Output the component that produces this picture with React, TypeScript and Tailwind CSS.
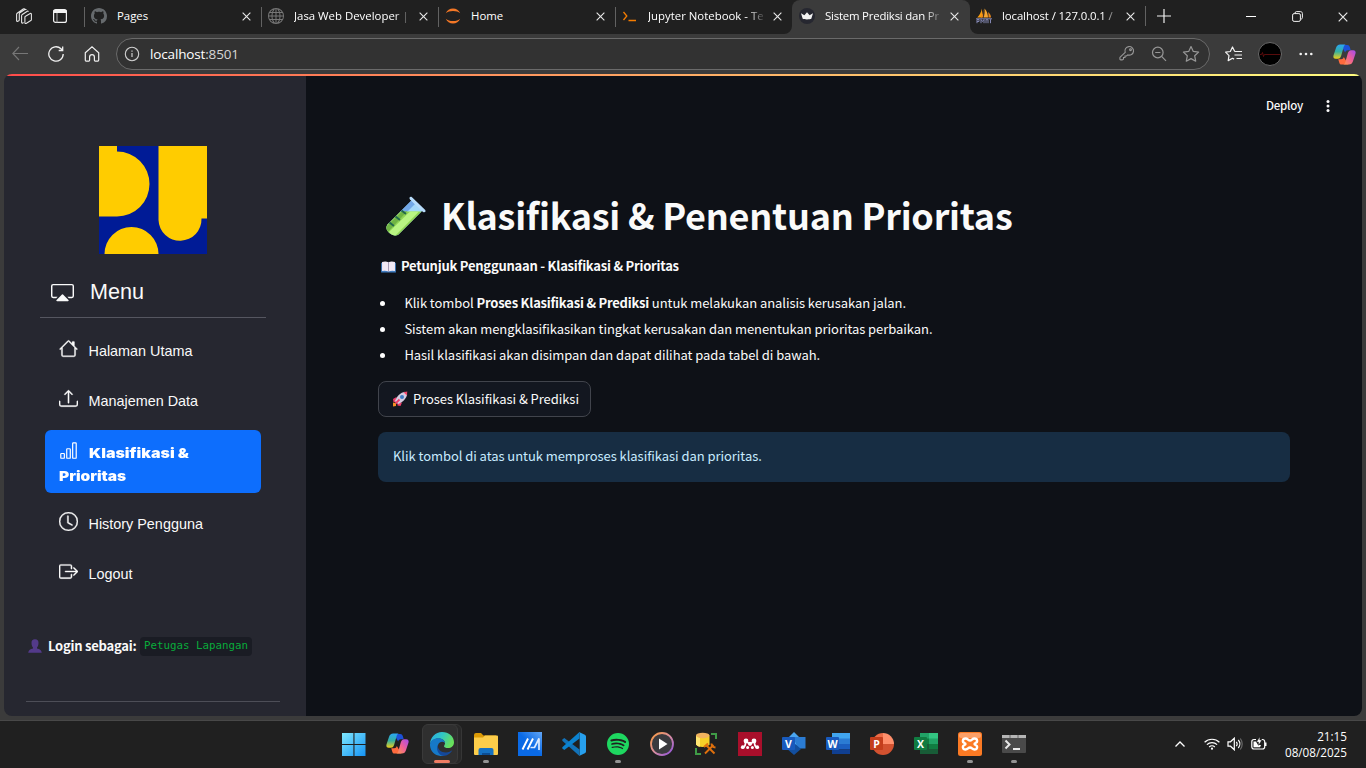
import React from "react";
import { BsCast, BsHouse, BsUpload, BsBarChart, BsClock, BsBoxArrowRight, BsGithub, BsGlobe, BsSpotify } from "react-icons/bs";

const SEGOE = "font-['Open_Sans','Noto_Sans',sans-serif]";
const SOURCE = "font-['Noto_Sans_CJK_JP','Noto_Sans_CJK_SC',sans-serif]";
const ARIAL = "font-['Liberation_Sans',Arial,sans-serif]";

function T({ className = "", children }: { className?: string; children: React.ReactNode }) {
  return <span className={`whitespace-nowrap ${className}`}>{children}</span>;
}

function CloseIcon({ className = "size-[9px]" }: { className?: string }) {
  return (
    <svg viewBox="0 0 10 10" className={className} fill="none" stroke="#e8e8e8" strokeWidth="1.2">
      <path d="M.7.7l8.6 8.6M9.3.7L.7 9.3" />
    </svg>
  );
}

function Copilot({ id, className }: { id: string; className: string }) {
  return (
    <svg viewBox="0 0 24 24" className={className}>
      <defs>
        <linearGradient id={`${id}a`} x1="0" y1="0" x2="0" y2="1">
          <stop offset="0" stopColor="#2aa5f5" />
          <stop offset=".5" stopColor="#35b0a0" />
          <stop offset="1" stopColor="#f3d016" />
        </linearGradient>
        <linearGradient id={`${id}b`} x1="1" y1="0" x2="0" y2="1">
          <stop offset="0" stopColor="#a24bf0" />
          <stop offset=".5" stopColor="#ee5f96" />
          <stop offset="1" stopColor="#ff9a4a" />
        </linearGradient>
      </defs>
      <path d="M8 2h7c1.600 0 2.200 1 2.600 2.400L18.500 7.500h-3c-1.500 0-2.300.800-2.800 2.300z" fill="#1c50d8" />
      <path d="M16 22.500H9c-1.600 0-2.200-1-2.600-2.400L5.500 17h3c1.500 0 2.300-.800 2.800-2.300z" fill="#ff6a3d" />
      <path d="M7.500 1.500h6c-1.500.3-2 1.400-2.400 2.800L8.600 13C8 15 7 16.500 5 16.500H3C.8 16.500 0 15 .5 13l2.600-7.800C3.800 2.800 5.200 1.500 7.500 1.500z" fill={`url(#${id}a)`} />
      <path d="M16.500 22.500h-6c1.500-.3 2-1.400 2.400-2.800l2.500-8.700c.6-2 1.600-3.500 3.600-3.500h2c2.200 0 3 1.500 2.500 3.500l-2.600 7.800c-.7 2.400-2.100 3.700-4.400 3.700z" fill={`url(#${id}b)`} />
    </svg>
  );
}

const JupyterIcon = (
  <svg viewBox="0 0 16 16" className="size-4" fill="#f37726">
    <path d="M.8 5.200C2 2.200 4.800.5 8 .5s6 1.700 7.200 4.700C13.500 3.700 11 2.900 8 2.900s-5.500.8-7.200 2.300zM.8 10.800C2 13.800 4.800 15.500 8 15.500s6-1.700 7.200-4.700c-1.700 1.500-4.200 2.300-7.200 2.300s-5.500-.8-7.200-2.300z" />
  </svg>
);
const PromptIcon = (
  <svg viewBox="0 0 16 16" className="size-4" fill="none" stroke="#f57c00" strokeWidth="1.300">
    <path d="M1.500 4l3.300 4-3.300 4M6.500 12.500H14" />
  </svg>
);
const CrownIcon = (
  <svg viewBox="0 0 16 16" className="size-4">
    <circle cx="8" cy="8" r="8" fill="#262730" />
    <path d="M2 5.200l3.400 2L8 4.200l2.600 3 3.400-2-1.700 5.600c-1.300.8-7.300.8-8.600 0z" fill="#f2f2f2" />
  </svg>
);
const PmaIcon = (
  <svg viewBox="0 0 16 16" className="size-4">
    <path d="M6 .5v9H1.200C3.500 7.500 5 4.500 6 .5z" fill="#f89c0e" />
    <path d="M7.200 1v8.500H4.800C6 7.500 6.900 4.500 7.200 1z" fill="#e8851a" />
    <path d="M8.500.5C11 3 12 6.500 12 9.500H7.600C8.500 7 8.800 4 8.500.5z" fill="#f5a632" />
    <path d="M12 4c2 1.500 3 3.500 3 5.500h-2.600C12.600 7.500 12.500 6 12 4z" fill="#e8851a" />
    <path d="M0 10.800h16M1 15.200v-3.700h2v2H1M5 15.200v-3.700l1.500 2 1.500-2v3.700M10 15.200v-3.500h2v3.500M14.500 15.200v-4" fill="none" stroke="#8387b3" strokeWidth="1" />
  </svg>
);

type Tab = { icon: React.ReactNode; title: string; active?: boolean; noline?: boolean; track?: string };
const tabs: Tab[] = [
  { icon: <BsGithub className="size-4 text-[#666a6d]" />, title: "Pages" },
  { icon: <BsGlobe className="size-4 text-[#777]" />, title: "Jasa Web Developer |" },
  { icon: JupyterIcon, title: "Home" },
  { icon: PromptIcon, title: "Jupyter Notebook - Te" },
  { icon: CrownIcon, title: "Sistem Prediksi dan Pr", active: true, track: "tracking-[-0.2px]" },
  { icon: PmaIcon, title: "localhost / 127.0.0.1 /", noline: true, track: "tracking-[-0.1px]" },
];

function TabBar() {
  return (
    <div className="flex h-[34px] items-stretch bg-[#202020]">
      <div className="flex w-[84px] items-center gap-5 pb-0.5 pl-4">
        <svg viewBox="0 0 16 16" className="size-4" fill="none" stroke="#e4e4e4" strokeWidth="1.100">
          <path d="M6.300 6.500l5-3.300c.6-.4 1 0 1 .6M6.300 6.500c-.5.300-.7.700-.7 1.200v6.600c0 .8.600 1 1.200.7l.8-.5" />
          <path d="M9.500 8.200l4.700-2.700c.6-.3 1.200 0 1.200.700v5.300c0 .5-.2.900-.6 1.100l-4.700 2.800c-.6.300-1.200 0-1.200-.7V9.300c0-.5.200-.9.600-1.100z" />
          <path d="M3.300 12.500l-1.500.8c-.6.300-1.200 0-1.200-.6V6.500c0-.5.200-.9.600-1.200L7.200 1c.6-.4 1.300-.2 1.500.5M3.300 12.500V6c0-.5.200-.9.600-1.200l5-3.300c.6-.4 1.200 0 1.400.5" />
        </svg>
        <svg viewBox="0 0 16 16" className="size-4" fill="none" stroke="#f3f3f3">
          <rect x="1.600" y="1.600" width="12.800" height="12.800" rx="2" strokeWidth="1.200" />
          <path d="M1.500 3.500h13" strokeWidth="3" />
          <path d="M5 5v9.500" strokeWidth="1" stroke="#aaa" />
        </svg>
      </div>
      {tabs.map((t, i) => {
        const faded = t.title.length > 6;
        return (
          <div key={t.title} className={`relative flex items-center pb-0.5 ${t.active ? "w-[178px] rounded-t-lg bg-[#3b3b3b]" : t.noline ? "w-[176px]" : "w-[177px]"}`}>
            {!t.active && !t.noline && <div className="absolute left-0 top-[7px] h-5 w-px bg-[#626262]" />}
            {t.active && (
              <>
                <svg viewBox="0 0 8 8" className="absolute -left-2 bottom-0 size-2"><path d="M8 0v8H0a8 8 0 0 0 8-8z" fill="#3b3b3b" /></svg>
                <svg viewBox="0 0 8 8" className="absolute -right-2 bottom-0 size-2"><path d="M0 0v8h8a8 8 0 0 1-8-8z" fill="#3b3b3b" /></svg>
              </>
            )}
            <div className={`${t.noline ? "ml-1.5" : "ml-[7px]"} flex w-4 shrink-0`}>{t.icon}</div>
            <div className={`ml-2.5 w-[118px] shrink-0 ${faded ? "[mask-image:linear-gradient(to_right,#000_85%,transparent)]" : ""}`}>
              <T className={`${SEGOE} block text-[11.400px] leading-[18px] text-white ${t.track ?? ""}`}>{t.title}</T>
            </div>
            <div className={`${i === 5 ? "ml-1.5" : "ml-[7px]"} flex`}><CloseIcon /></div>
          </div>
        );
      })}
      <div className="flex flex-1 items-center justify-between pb-0.5">
        <div className="flex items-center">
          <div className="-ml-px h-5 w-px bg-[#626262]" />
          <svg viewBox="0 0 14 14" className="ml-[11px] size-3.5" stroke="#f0f0f0" strokeWidth="1.200"><path d="M7 0v14M0 7h14" /></svg>
        </div>
        <div className="flex items-center pr-[18px]">
          <div className="h-px w-2.5 bg-white" />
          <svg viewBox="0 0 11 11" className="ml-9 size-[11px]" fill="none" stroke="#f3f3f3">
            <rect x=".6" y="2.600" width="7.800" height="7.800" rx="1.500" />
            <path d="M3 2.500V2C3 1.200 3.600.6 4.400.6h4c1.200 0 2 .8 2 2v4c0 .8-.6 1.500-1.400 1.500" />
          </svg>
          <CloseIcon className="ml-[35px] mt-px size-2.5" />
        </div>
      </div>
    </div>
  );
}

function Toolbar() {
  return (
    <div className="flex h-10 items-center bg-[#3b3b3b]">
      <svg viewBox="0 0 16 16" className="ml-3 size-4" fill="none" stroke="#777" strokeWidth="1.100"><path d="M7 1L.8 7.500 7 14M1 7.500h15" /></svg>
      <svg viewBox="0 0 16 16" className="ml-5 size-4" fill="none" stroke="#f0f0f0" strokeWidth="1.300"><path d="M15.200 8A7.200 7.200 0 1 1 13 2.800L14.500 4.300M14.700.5v4h-4" /></svg>
      <svg viewBox="0 0 16 16" className="ml-5 size-4" fill="none" stroke="#f0f0f0" strokeWidth="1.200"><path d="M1.300 6.700L8 .9l6.700 5.800v7.400c0 .6-.3 1-.9 1h-2.600c-.5 0-.8-.3-.8-.8V11c0-1.300-1-2.300-2.400-2.300S5.600 9.700 5.600 11v3.300c0 .5-.3.800-.8.800H2.200c-.6 0-.9-.4-.9-1z" /></svg>
      <div className="ml-4 flex h-8 w-[1094px] shrink-0 items-center rounded-full border border-[#6a6a6a] bg-[#323232]">
        <svg viewBox="0 0 16 16" className="ml-[7px] size-4" fill="none" stroke="#cfcfcf"><circle cx="8" cy="8" r="6.700" strokeWidth="1.100" /><path d="M8 7v4" strokeWidth="1.200" /><path d="M8 4.600v1.200" strokeWidth="1.200" /></svg>
        <T className={`${SEGOE} ml-2.5 flex-1 text-[13.500px] tracking-[-0.150px] text-white`}>localhost<span className="text-[#d6d6d6]">:8501</span></T>
        <div className="mr-2.5 flex gap-4">
          <svg viewBox="0 0 16 16" className="size-4" fill="none" stroke="#979797" strokeWidth="1.100">
            <path d="M6.200 7.300a4.300 4.300 0 1 1 2.600 2.600L7.500 11H6v1.500H4.500V14l-.6.600c-.2.200-.4.300-.7.300H1.700c-.5 0-.8-.3-.8-.8v-1.300c0-.3.100-.5.300-.7z" /><circle cx="11.500" cy="4.700" r=".9" />
          </svg>
          <svg viewBox="0 0 16 16" className="mt-px size-4" fill="none" stroke="#979797" strokeWidth="1.200"><circle cx="6.800" cy="6.500" r="5.300" /><path d="M10.600 10.300l4.400 4.500M4.200 6.500h5.200" /></svg>
          <svg viewBox="0 0 18 18" className="-mx-px size-[18px]" fill="none" stroke="#979797" strokeWidth="1.200" strokeLinejoin="round"><path d="M9 1.500l2.300 4.900 5.300.7-3.900 3.700 1 5.400L9 13.600l-4.700 2.600 1-5.400L1.400 7.100l5.300-.7z" /></svg>
        </div>
      </div>
      <svg viewBox="0 0 18 16" className="ml-[15px] h-4 w-[18px] shrink-0" fill="none" stroke="#f3f3f3" strokeWidth="1.200" strokeLinejoin="round"><path d="M9.600 5.300L7.500 1 5.300 5.500.6 6.200l3.400 3.400-.8 5 4.300-2.300 1.600.8M9.500 5.500h7.500M9.500 9h7.500M11.500 12.500H17" /></svg>
      <svg viewBox="0 0 24 24" className="ml-[15px] size-6 shrink-0"><circle cx="12" cy="12" r="11.500" fill="#000" stroke="#696969" /><path d="M2 12.500h1.500l1-2 1 4 .8-2h16" fill="none" stroke="#6e0f0f" strokeWidth=".8" /></svg>
      <svg viewBox="0 0 14 4" className="ml-[17px] h-1 w-3.5 shrink-0" fill="#f3f3f3"><circle cx="1.700" cy="2" r="1.300" /><circle cx="7" cy="2" r="1.300" /><circle cx="12.300" cy="2" r="1.300" /></svg>
      <Copilot id="tc" className="ml-5 size-[23px] shrink-0" />
    </div>
  );
}

function NavItem({ icon, label }: { icon: React.ReactNode; label: string }) {
  return (
    <div className="flex h-[50px] items-center pl-[55px]">
      <div className="mb-1.5 flex w-[19px]">{icon}</div>
      <T className={`${ARIAL} ml-[10.500px] mt-0.5 text-[14.400px] text-[#fafafa]`}>{label}</T>
    </div>
  );
}

function Sidebar() {
  return (
    <div className="flex w-[302px] shrink-0 flex-col bg-[#262730] text-[#fafafa]">
      <svg viewBox="0 0 108 108" className="ml-[95px] mt-[70px] size-[108px] shrink-0">
        <rect width="108" height="108" fill="#001b96" />
        <path d="M0 0h18v5.500a32.500 32.500 0 0 1 0 65H0zM59.500 0H108v72.500h-5.500A21.500 21.500 0 0 1 59.500 74zM5.500 108a27 27 0 0 1 54 0z" fill="#ffcc00" />
      </svg>
      <div className="ml-9 mt-3.5 flex h-[50px] w-[226px] items-center border-b border-[#555660] pl-[11px]">
        <BsCast className="size-[23px]" />
        <T className={`${ARIAL} ml-4 mt-0 text-[21.600px]`}>Menu</T>
      </div>
      <div className="mt-2">
        <NavItem icon={<BsHouse className="size-[19px] [stroke-width:0.300]" />} label="Halaman Utama" />
        <NavItem icon={<BsUpload className="size-[19px] [stroke-width:0.300]" />} label="Manajemen Data" />
      </div>
      <div className="ml-[41px] mt-1 h-[63px] w-[216px] rounded-md bg-[#0d6efd] pl-3.5 pt-3 font-['Inter',sans-serif] text-[13.500px] font-black text-white">
        <div className="flex h-[23px] items-center">
          <BsBarChart className="mb-1.5 size-[19px]" />
          <T className="ml-[11px] origin-left scale-x-[1.185]">Klasifikasi &amp;</T>
        </div>
        <div className="flex h-[23px] items-center"><T className="origin-left scale-x-[1.150]">Prioritas</T></div>
      </div>
      <div className="mt-[6px]">
        <NavItem icon={<BsClock className="size-[19px] [stroke-width:0.300]" />} label="History Pengguna" />
        <NavItem icon={<BsBoxArrowRight className="size-[19px] [stroke-width:0.300]" />} label="Logout" />
      </div>
      <div className="ml-6 mt-[37px] flex h-5 items-center">
        <svg viewBox="0 0 14 14" className="size-3.5 shrink-0"><path d="M3.500 4C3.500 1.500 4.500.3 7 .3S10.500 1.500 10.500 4 9.500 8.300 9 8.500v1c2.500.5 4.500 1.500 4.800 4.200H.2C.500 11 2.500 10 5 9.500v-1C4.500 8.300 3.500 6.500 3.500 4z" fill="#533a8a" /></svg>
        <T className={`${SOURCE} ml-1.5 text-[13px] font-bold tracking-[-0.230px]`}>Login sebagai:</T>
        <div className="ml-[3.500px] flex h-[19px] w-28 items-center rounded bg-[#1a1c24] pl-1">
          <T className="font-['DejaVu_Sans_Mono','Liberation_Mono',monospace] text-[10.800px] text-[#09ab3b]">Petugas Lapangan</T>
        </div>
      </div>
      <div className="ml-[22px] mt-[45px] h-px w-[254px] bg-[#4d4e57]" />
    </div>
  );
}

const Bullet = () => <span className="ml-0.5 mr-[19.400px] size-[5px] shrink-0 rounded-full bg-white" />;

function Main() {
  return (
    <div className={`flex flex-1 flex-col bg-[#0e1117] text-[#fafafa] ${SOURCE}`}>
      <div className="flex h-[60px] items-center justify-end pr-8">
        <T className="text-[11.500px] font-medium tracking-[-0.250px]">Deploy</T>
        <svg viewBox="0 0 4 14" className="ml-[23px] h-3.5 w-1" fill="#fafafa"><circle cx="2" cy="2.500" r="1.500" /><circle cx="2" cy="7" r="1.500" /><circle cx="2" cy="11.500" r="1.500" /></svg>
      </div>
      <div className="flex w-[984px] flex-col pl-[72px] pt-[52px]">
        <div className="flex h-[54px] items-center">
          <svg viewBox="0 0 42 42" className="ml-[7px] mt-1 size-[42px]">
            <defs><clipPath id="tube"><path d="M27 4L37.500 14.500 13.500 38.500C8.500 42.500 -2 34 2.500 28.500z" /></clipPath></defs>
            <g clipPath="url(#tube)">
              <rect width="42" height="42" fill="#a3d8fb" />
              <path d="M26 4l4 4-8 8h-8z" fill="#72a8e8" />
              <path d="M0 15.500h42V42H0z" fill="#8fd453" />
              <path d="M34 15.500L9 41l-5-5 21-20.500z" fill="#b9f583" />
              <path d="M0 32L17 15.500h5L3 36z" fill="#6fb444" />
            </g>
            <path d="M25 3.500c-1.500-2 .5-3.500 2-2.200l13 12.500c1.500 1.700-.2 3.200-2 2.200z" fill="#b7dcfb" />
            <path d="M4.500 26.500l4.500 3.500M10.500 20.500l4.500 3.500M16.500 14.500l4.500 3.500" stroke="#22694d" strokeWidth="1.900" />
          </svg>
          <T className="-mt-0.5 ml-3.5 text-[36px] font-bold leading-[54px] tracking-[-0.250px]">Klasifikasi &amp; Penentuan Prioritas</T>
        </div>
        <div className="mt-[13px] flex h-[22px] items-center">
          <svg viewBox="0 0 16 13" className="ml-[3px] mt-0.5 h-3 w-[15px]"><path d="M0 2h16v10.500H0z" fill="#3e7bbf" /><path d="M1 1q4-1.200 7 .3Q11-.2 15 1v9.800q-4-.8-7 .5-3-1.300-7-.5z" fill="#f1e9f5" /><path d="M8 1v10.500" stroke="#8c82a0" strokeWidth=".8" /></svg>
          <T className="ml-[5px] text-[13px] font-bold tracking-[-0.230px]">Petunjuk Penggunaan - Klasifikasi &amp; Prioritas</T>
        </div>
        <ul className="mt-[13px] text-[13px] tracking-[-0.055px]">
          <li className="flex h-[26px] items-center"><Bullet /><T className="tracking-[-0.060px]">Klik tombol <b className="tracking-[-0.230px]">Proses Klasifikasi &amp; Prediksi</b> untuk melakukan analisis kerusakan jalan.</T></li>
          <li className="flex h-[26px] items-center"><Bullet /><T>Sistem akan mengklasifikasikan tingkat kerusakan dan menentukan prioritas perbaikan.</T></li>
          <li className="flex h-[26px] items-center"><Bullet /><T>Hasil klasifikasi akan disimpan dan dapat dilihat pada tabel di bawah.</T></li>
        </ul>
        <div className="mt-[13px] flex h-9 w-[213px] items-center rounded-lg border border-[#41444c] bg-[#131720]">
          <svg viewBox="0 0 16 16" className="ml-[13px] size-4">
            <path d="M4.500 6L1 8l.5 3h3zM10 11.500L8.500 15l-3-.5v-3z" fill="#ee3e6c" />
            <path d="M1 11.500l3 .5v3l-3 .5z" fill="#f59124" />
            <path d="M3 10C5 5 8.500 1.500 13 .8l2.200 2.200C14.500 7.500 11 11 6 13z" fill="#d5cbe0" />
            <path d="M11.500 1.200L15.300.5l-.5 4z" fill="#f5476b" />
            <circle cx="10" cy="6" r="2" fill="#3f7dc4" />
            <path d="M3.500 12.500l4-4" stroke="#ee3e6c" strokeWidth="1.800" />
          </svg>
          <T className="ml-[5px] text-[13px] tracking-[-0.060px]">Proses Klasifikasi &amp; Prediksi</T>
        </div>
        <div className="mt-[15px] flex h-[50px] items-center rounded-lg bg-[#172d43] pb-0.5 pl-[15px] text-[13px] tracking-[-0.055px] text-[#c7ebff]">
          <T>Klik tombol di atas untuk memproses klasifikasi dan prioritas.</T>
        </div>
      </div>
    </div>
  );
}

function OfficeIcon({ letter, tile, children }: { letter: string; tile: string; children: React.ReactNode }) {
  return (
    <svg viewBox="0 0 24 24" className="size-6">
      {children}
      <rect x="0" y="5" width="13" height="13" rx="1" fill={tile} />
      <text x="6.500" y="15.500" textAnchor="middle" fill="#fff" fontFamily="Open Sans" fontWeight="700" fontSize="10.500">{letter}</text>
    </svg>
  );
}

const apps: { name: string; dot?: boolean; icon: React.ReactNode }[] = [
  { name: "start", icon: <svg viewBox="0 0 24 24" className="size-6"><defs><linearGradient id="win" x1="0" y1="0" x2="1" y2="1"><stop offset="0" stopColor="#7fe8fd" /><stop offset="1" stopColor="#1593f5" /></linearGradient></defs><path d="M0 1h11.400v11H0zM12.500 1H23.500v11h-11zM0 13.100h11.400V24H0zM12.500 13.100h11V24h-11z" fill="url(#win)" /></svg> },
  { name: "copilot", icon: <Copilot id="bc" className="size-[23px]" /> },
  { name: "edge", icon: <svg viewBox="0 0 24 24" className="size-6"><defs><linearGradient id="e1" x1="0" y1="0" x2="1" y2=".4"><stop offset="0" stopColor="#2aa8e8" /><stop offset=".5" stopColor="#30c6c6" /><stop offset="1" stopColor="#68e05c" /></linearGradient></defs><path d="M0 12C.4 5 5.500 0 12 0c7 0 12 4.800 12 10.200 0 3.700-2.700 5.800-6 5.800-2.200 0-4-.7-4-1.800 0-.7 1-1.100 1-2.900C15 8.500 12 6.500 8.500 6.500 4 6.500 1 9 0 12z" fill="url(#e1)" /><path d="M0 12c.7-3.500 4-5.700 8-5.700 3.700 0 6.600 2 7 4.700C13 9 9.500 9.500 8.200 12.500 6.500 16.500 9.500 21 14 23.700 6 25.500-.5 19.500 0 12z" fill="#1679c8" /><path d="M8.200 12.500C6.800 17 11 20.500 16 20.500c2.700 0 4.700-1 6.300-2.200C20.500 21.500 17 24 13.500 24 8 23 5.500 17 8.200 12.500z" fill="#14489a" /></svg> },
  { name: "files", dot: true, icon: <svg viewBox="0 0 24 24" className="size-6"><path d="M0 3q0-2 2-2h5l2.500 2.500H22V8H0z" fill="#dc9a05" /><path d="M0 5.500h9L11 3.500h12q1 0 1 1V22q0 1-1 1H1q-1 0-1-1z" fill="#fccd4a" /><path d="M4.500 23v-5q0-2 2-2h11q2 0 2 2v5z" fill="#1571c2" /><path d="M8 21h8v2H8z" fill="#0c4d92" /></svg> },
  { name: "myasus", icon: <svg viewBox="0 0 24 24" className="size-6"><defs><linearGradient id="as" x1="0" y1="1" x2="1" y2="0"><stop offset=".5" stopColor="#0a6ae6" /><stop offset="1" stopColor="#63a7f7" /></linearGradient></defs><path d="M0 0h24v24H0z" fill="url(#as)" /><path d="M4.500 17.500L10 6.500M9.500 17.500L15 6.500" stroke="#fff" strokeWidth="1.900" fill="none" /><path d="M12.500 15.500h4L21 6.500v11.500" stroke="#dcebff" strokeWidth="1.700" fill="none" /></svg> },
  { name: "vscode", icon: <svg viewBox="0 0 24 24" className="size-6"><path d="M17.500 17.500L2.300 6 .3 7.500v1.200L17.500 24z" fill="#1272b8" /><path d="M17.500 6.500L2.300 18 .3 16.500v-1.200L17.500 0z" fill="#0b82cf" /><path d="M17 0l5.800 2.800q1.200.5 1.200 1.700v15q0 1.200-1.200 1.700L17 24q.7-.5.7-1.500v-21Q17.700.5 17 0z" fill="#27a0ee" /></svg> },
  { name: "spotify", dot: true, icon: <BsSpotify className="size-[22px] text-[#1ed760]" /> },
  { name: "player", icon: <svg viewBox="0 0 24 24" className="size-6"><defs><linearGradient id="mp" x1="0" y1="0" x2="1" y2="1"><stop offset="0" stopColor="#f99a3c" /><stop offset=".5" stopColor="#d98fa0" /><stop offset="1" stopColor="#8a4ee0" /></linearGradient></defs><circle cx="12" cy="12" r="11" fill="#3a3a3e" stroke="url(#mp)" strokeWidth="1.800" /><path d="M9 6.500l8.500 5.500L9 17.500z" fill="#fff" /></svg> },
  { name: "dbtool", icon: <svg viewBox="0 0 24 24" className="size-6"><path d="M17 2h5v5M2 16v6h5" fill="none" stroke="#3f9b46" strokeWidth="2" /><path d="M2 3.500h13.500v9Q14 15 8.700 15T2 12.500z" fill="#f5cf28" /><ellipse cx="8.700" cy="3.500" rx="6.700" ry="2.700" fill="#f0b25e" /><path d="M2 4v8.500Q3.500 14.500 6 14.800V6Q3.500 5.500 2 4z" fill="#ffe673" /><path d="M11 21.500L19.500 13M20.500 21.500L12.500 13.500M17.500 11.500q0 3.500 4 4M10 15l4-3.500" stroke="#e0700c" strokeWidth="1.900" fill="none" /></svg> },
  { name: "mendeley", icon: <svg viewBox="0 0 24 24" className="size-6"><path d="M0 0h24v24H0z" fill="#a90f2b" /><g fill="#fff"><circle cx="8" cy="9" r="2.400" /><circle cx="16" cy="9" r="2.400" /><circle cx="12" cy="11.800" r="2.100" /><circle cx="4.800" cy="15.200" r="1.900" /><circle cx="19.200" cy="15.200" r="1.900" /><circle cx="9.600" cy="15.400" r="1.500" /><circle cx="14.400" cy="15.400" r="1.500" /></g><path d="M5 15c2 0 2.500-1.500 2.500-5M19 15c-2 0-2.500-1.500-2.500-5M8 9.500l4 2.500 4-2.500" stroke="#fff" strokeWidth="1.700" fill="none" /></svg> },
  { name: "visio", icon: <OfficeIcon letter="V" tile="#185abd"><path d="M12 0l8 8-8 8-8-8z" fill="#4aa5ef" /><path d="M11 5h12.500v11.500H16z" fill="#2b7cd3" /><path d="M4 16l8-5 7 6-7 6z" fill="#134f9f" /></OfficeIcon> },
  { name: "word", icon: <OfficeIcon letter="W" tile="#185abd"><path d="M6 1h18v6H6z" fill="#41a5ee" /><path d="M6 6.500h18V12H6z" fill="#2b7cd3" /><path d="M6 12h18v5.500H6z" fill="#1b5fc0" /><path d="M6 17.500h18V22H6z" fill="#103f91" /></OfficeIcon> },
  { name: "powerpoint", icon: <OfficeIcon letter="P" tile="#c43e1c"><path d="M13 1a11 11 0 0 0-11 11h11z" fill="#ed6c47" /><path d="M13 1a11 11 0 0 1 11 11H13z" fill="#ff8f6b" /><path d="M2 12a11 11 0 0 0 22 0z" fill="#d35230" /></OfficeIcon> },
  { name: "excel", icon: <OfficeIcon letter="X" tile="#107c41"><path d="M6 1h9v6H6z" fill="#21a366" /><path d="M15 1h9v6h-9z" fill="#33c481" /><path d="M6 6.500h9V12H6z" fill="#107c41" /><path d="M15 6.500h9V12h-9z" fill="#21a366" /><path d="M6 12h18v10H6z" fill="#185c37" /><path d="M15 12h9v5h-9z" fill="#107c41" /></OfficeIcon> },
  { name: "xampp", dot: true, icon: <svg viewBox="0 0 24 24" className="size-6"><rect width="24" height="24" rx="2.500" fill="#fb7a24" /><rect x="1" y="1" width="22" height="5" rx="2" fill="#fda067" /><path d="M7.500 6.500c-3 0-3.500 3.500-1 4.500 1.300.5 1.300 1.500 0 2-2.500 1-2 4.500 1 4.500 2.500 0 2.500-2 4.500-2s2 2 4.500 2c3 0 3.500-3.500 1-4.500-1.300-.5-1.300-1.500 0-2 2.500-1 2-4.500-1-4.500-2.500 0-2.500 2-4.500 2s-2-2-4.500-2z" fill="none" stroke="#fff" strokeWidth="2.400" /></svg> },
  { name: "terminal", dot: true, icon: <svg viewBox="0 0 24 24" className="size-6"><rect y="3" width="24" height="18" rx="1" fill="#4a4a4a" /><path d="M0 3h24v3H0z" fill="#b5b5b5" /><path d="M8 3v3M16 3v3" stroke="#666" /><path d="M3.500 8.500l4 4-4 4" fill="none" stroke="#e8e8e8" strokeWidth="2" /><path d="M11 17h7" stroke="#fff" strokeWidth="1.800" /></svg> },
];

function Taskbar() {
  return (
    <div className="flex h-[47px] items-stretch justify-between bg-[#202020]">
      <div className="ml-[331.500px] flex">
        {apps.map((a) => (
          <div key={a.name} className="relative flex w-11 items-center justify-center pb-0.5">
            {a.name === "edge" && (
              <>
                <div className="absolute left-[7px] top-[3px] h-10 w-[35px] rounded-md border border-[#363636] bg-[#282828]" />
                <div className="absolute left-0.5 top-[3px] h-10 w-9 rounded-md border border-[#3a3a3a] bg-[#2f2f2f]" />
                <div className="absolute bottom-[5px] h-[3px] w-4 rounded-full bg-[#ef7d64]" />
              </>
            )}
            {a.dot && <div className="absolute bottom-[5px] h-[3px] w-1.5 rounded-full bg-[#949494]" />}
            <div className="relative flex">{a.icon}</div>
          </div>
        ))}
      </div>
      <div className="flex items-center pb-0.5 pr-[19px]">
        <svg viewBox="0 0 10 6" className="h-1.5 w-2.5" fill="none" stroke="#fff" strokeWidth="1.300"><path d="M.5 5.500L5 1l4.500 4.500" /></svg>
        <svg viewBox="0 0 16 12" className="ml-[19px] h-3 w-4" fill="none" stroke="#fff" strokeWidth="1.200"><path d="M.6 4.300a10.500 10.500 0 0 1 14.800 0M2.900 6.700a7.200 7.200 0 0 1 10.200 0M5.200 9a4 4 0 0 1 5.600 0" /><circle cx="8" cy="10.700" r="1.100" fill="#fff" stroke="none" /></svg>
        <svg viewBox="0 0 16 14" className="ml-[7px] h-3.5 w-4" fill="none" stroke="#fff" strokeWidth="1.200"><path d="M1 4.800h2.500L7.300 1.200v11.600L3.500 9.200H1zM9.300 4.800c1 1.300 1 3.100 0 4.400M11.300 3c2 2.300 2 5.700 0 8" /><path d="M13.300 1.500c2.500 3.200 2.500 7.800 0 11" stroke="#6a6a6a" /></svg>
        <svg viewBox="0 0 16 14" className="ml-2 h-3.5 w-4" fill="none" stroke="#fff" strokeWidth="1.200"><path d="M5 2.500H3C1.600 2.500.8 3.300.8 4.700v5.100c0 1.400.8 2.200 2.200 2.200h8.500c1.400 0 2.200-.8 2.200-2.200V4.700c0-1.400-.8-2.200-2.200-2.200h-.8M14.900 5.500v3.500" /><path d="M2.500 4.500H5l2 3.500h3l-1 2.300H2.500z" fill="#fff" stroke="none" /><path d="M8.800 0v3h2L7.500 8.500V5h-2z" fill="#fff" stroke="#202020" strokeWidth=".4" /></svg>
        <div className={`${SEGOE} ml-[18px] flex flex-col items-end text-[11.700px] leading-4 text-white`}>
          <T>21:15</T>
          <T>08/08/2025</T>
        </div>
      </div>
    </div>
  );
}

export default function App() {
  return (
    <div className="flex h-[768px] w-[1366px] flex-col overflow-hidden bg-[#3b3b3b]">
      <TabBar />
      <Toolbar />
      <div className="mx-1 flex h-[642px] flex-col overflow-hidden rounded-lg">
        <div className="h-0.5 shrink-0 bg-linear-to-r from-[#ff4b4b] to-[#fffd80]" />
        <div className="flex flex-1"><Sidebar /><Main /></div>
      </div>
      <div className="h-[5px] border-b border-[#484848]" />
      <Taskbar />
    </div>
  );
}
